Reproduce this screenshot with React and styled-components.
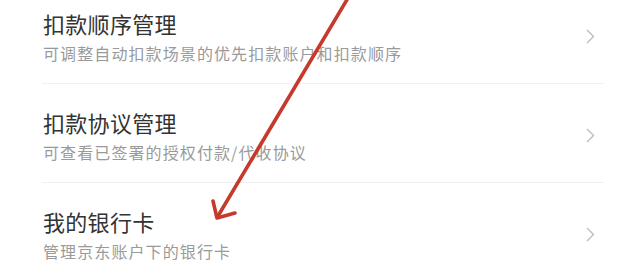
import React from "react";
import styled, { createGlobalStyle } from "styled-components";

const Global = createGlobalStyle`
  html, body { margin: 0; padding: 0; background: #ffffff; }
  body { font-family: "Noto Sans CJK SC", "Noto Sans", sans-serif; overflow: hidden; }
`;

const Page = styled.div`
  position: relative;
  width: 637px;
  height: 280px;
  overflow: hidden;
  background: #fff;
`;

const List = styled.ul`
  list-style: none;
  margin: -15px 33px 0 42px;
  padding: 0;
`;

const Row = styled.li`
  display: flex;
  align-items: center;
  justify-content: space-between;
  padding: 27px 9px 22px 1px;
  border-bottom: 1px solid #f0f0f0;
`;

const Texts = styled.div`
  display: flex;
  flex-direction: column;
  gap: 11px;
`;

const Title = styled.div`
  font-size: 22px;
  line-height: 22px;
  color: #333333;
  letter-spacing: 0.3px;
`;

const Sub = styled.div`
  font-size: 16px;
  line-height: 16px;
  color: #9a9a9a;
  letter-spacing: 1.1px;
`;

const Chevron = styled.svg`
  width: 9px;
  height: 15px;
  flex: none;
`;

const Overlay = styled.svg`
  position: absolute;
  left: 0;
  top: 0;
  width: 637px;
  height: 280px;
  pointer-events: none;
`;

const items = [
  { title: "扣款顺序管理", sub: "可调整自动扣款场景的优先扣款账户和扣款顺序" },
  { title: "扣款协议管理", sub: "可查看已签署的授权付款/代收协议" },
  { title: "我的银行卡", sub: "管理京东账户下的银行卡" },
];

export default function App() {
  return (
    <Page>
      <Global />
      <List>
        {items.map((it) => (
          <Row key={it.title}>
            <Texts>
              <Title>{it.title}</Title>
              <Sub>{it.sub}</Sub>
            </Texts>
            <Chevron viewBox="0 0 9 15">
              <path d="M1 1 L7.5 7.5 L1 14" fill="none" stroke="#bdbdbd" strokeWidth="1.4" />
            </Chevron>
          </Row>
        ))}
      </List>
      <Overlay viewBox="0 0 637 280">
        <g stroke="#c63a2e" strokeWidth="3.6" strokeLinecap="round" strokeLinejoin="round" fill="none">
          <path d="M348 -2 L218 216" />
          <path d="M213 201 L217 218 L235 213" />
        </g>
      </Overlay>
    </Page>
  );
}
